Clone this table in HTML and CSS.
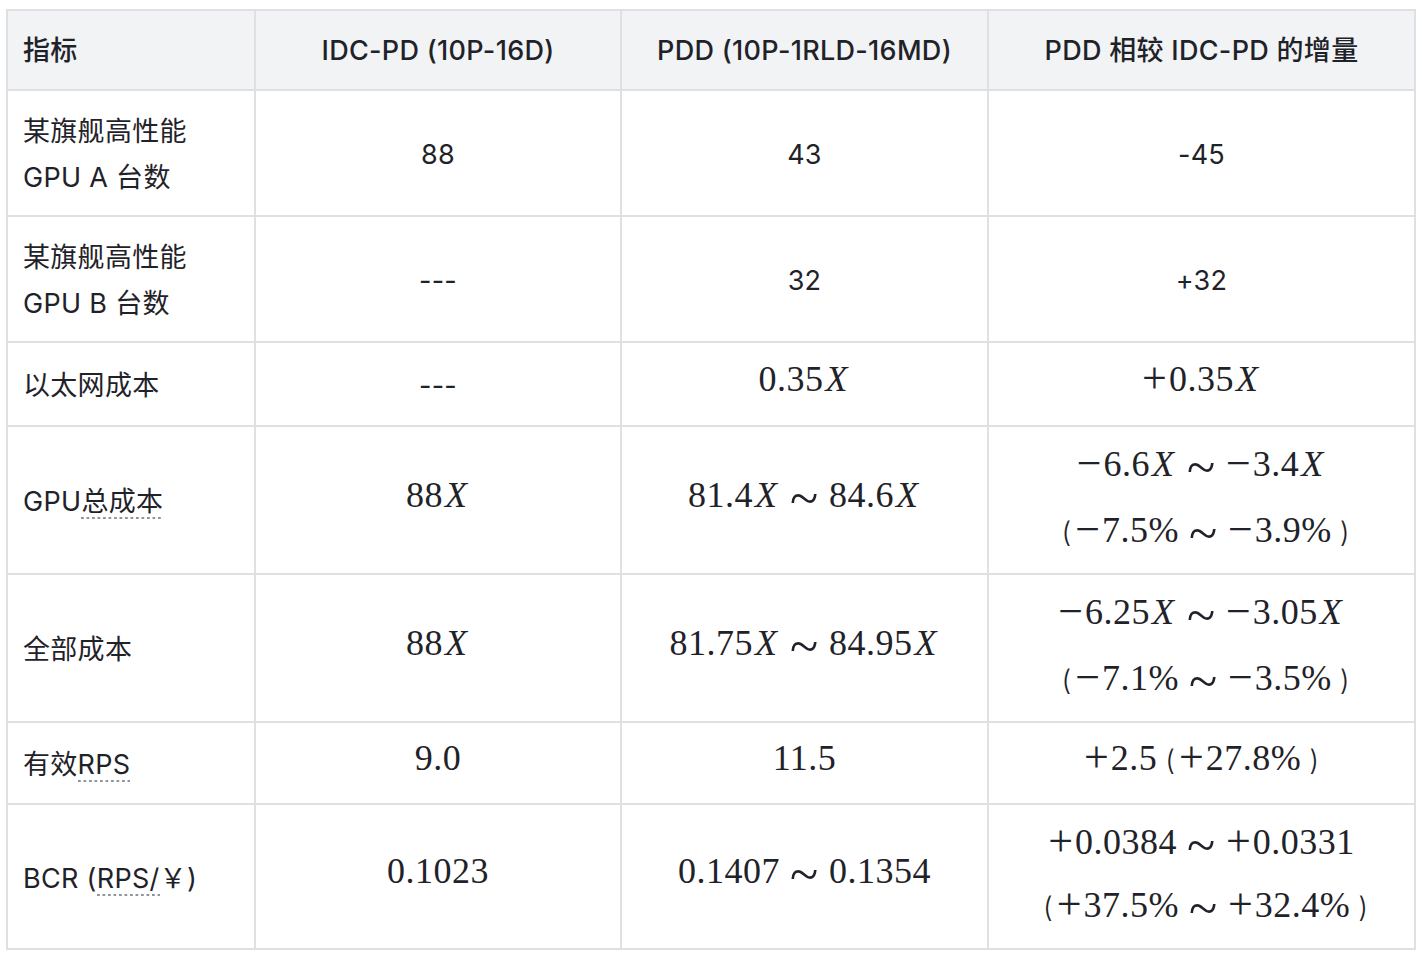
FILE: index.html
```html
<!DOCTYPE html>
<html lang="zh-CN">
<head>
<meta charset="utf-8">
<title>PDD vs IDC-PD</title>
<link rel="stylesheet" href="styles.css">
</head>
<body>
<div class="page">
  <table class="metrics">
    <colgroup>
      <col class="c1"><col class="c2"><col class="c3"><col class="c4">
    </colgroup>
    <thead>
      <tr class="h-head">
        <th class="label">指标</th>
        <th>IDC-PD (10P-16D)</th>
        <th>PDD (10P-1RLD-16MD)</th>
        <th>PDD 相较 IDC-PD 的增量</th>
      </tr>
    </thead>
    <tbody>
      <tr class="h-126">
        <td class="label">某旗舰高性能<br>GPU A 台数</td>
        <td>88</td>
        <td>43</td>
        <td>-45</td>
      </tr>
      <tr class="h-126">
        <td class="label">某旗舰高性能<br>GPU B 台数</td>
        <td>---</td>
        <td>32</td>
        <td>+32</td>
      </tr>
      <tr class="h-84">
        <td class="label">以太网成本</td>
        <td>---</td>
        <td class="m"><span class="math">0.35<i>X</i></span></td>
        <td class="m"><span class="math"><span class="op">+</span>0.35<i>X</i></span></td>
      </tr>
      <tr class="h-148">
        <td class="label">GPU<span class="mark">总成本</span></td>
        <td class="m"><span class="math">88<i>X</i></span></td>
        <td class="m"><span class="math">81.4<i>X</i><span class="rel">~</span>84.6<i>X</i></span></td>
        <td class="s">
          <div class="stack">
            <span class="math"><span class="op">−</span>6.6<i>X</i><span class="rel">~</span><span class="op">−</span>3.4<i>X</i></span>
            <span class="math"><span class="lp">(</span><span class="op">−</span>7.5%<span class="rel">~</span><span class="op">−</span>3.9%<span class="rp">)</span></span>
          </div>
        </td>
      </tr>
      <tr class="h-148">
        <td class="label">全部成本</td>
        <td class="m"><span class="math">88<i>X</i></span></td>
        <td class="m"><span class="math">81.75<i>X</i><span class="rel">~</span>84.95<i>X</i></span></td>
        <td class="s">
          <div class="stack">
            <span class="math"><span class="op">−</span>6.25<i>X</i><span class="rel">~</span><span class="op">−</span>3.05<i>X</i></span>
            <span class="math"><span class="lp">(</span><span class="op">−</span>7.1%<span class="rel">~</span><span class="op">−</span>3.5%<span class="rp">)</span></span>
          </div>
        </td>
      </tr>
      <tr class="h-82">
        <td class="label">有效<span class="mark">RPS</span></td>
        <td class="m"><span class="math">9.0</span></td>
        <td class="m"><span class="math">11.5</span></td>
        <td class="m"><span class="math"><span class="op">+</span>2.5<span class="lp">(</span><span class="op">+</span>27.8%<span class="rp">)</span></span></td>
      </tr>
      <tr class="h-145">
        <td class="label">BCR (<span class="mark">RPS/</span>￥)</td>
        <td class="m"><span class="math">0.1023</span></td>
        <td class="m"><span class="math">0.1407<span class="rel">~</span>0.1354</span></td>
        <td class="s">
          <div class="stack tight">
            <span class="math"><span class="op">+</span>0.0384<span class="rel">~</span><span class="op">+</span>0.0331</span>
            <span class="math"><span class="lp">(</span><span class="op">+</span>37.5%<span class="rel">~</span><span class="op">+</span>32.4%<span class="rp">)</span></span>
          </div>
        </td>
      </tr>
    </tbody>
  </table>
</div>
</body>
</html>
```
FILE: styles.css
```css
html, body {
  margin: 0;
  padding: 0;
  background: #ffffff;
}

.page {
  padding: 9px 6px;
}

.metrics {
  border-collapse: collapse;
  table-layout: fixed;
  width: 1410px;
  font-family: "Inter", "Noto Sans CJK SC", sans-serif;
  font-size: 27px;
  letter-spacing: 0.3px;
  color: #1f2329;
}

.c1 { width: 248px; }
.c2 { width: 366px; }
.c3 { width: 367px; }
.c4 { width: 427px; }

.metrics th,
.metrics td {
  border: 2px solid #dee0e3;
  text-align: center;
  vertical-align: middle;
  padding: 3px 15px 0;
  line-height: 46px;
}

.metrics th {
  background: #f2f3f5;
  font-weight: 500;
  padding-top: 2px;
}

.metrics .label {
  text-align: left;
}

.metrics td.label {
  padding-top: 4px;
}

.metrics td.m {
  padding: 0 15px 8px;
}

.metrics td.s {
  padding: 0 15px 5px;
}

.h-head { height: 80px; }
.h-126 { height: 126px; }
.h-84 { height: 84px; }
.h-148 { height: 148px; }
.h-82 { height: 82px; }
.h-145 { height: 145px; }

.mark {
  background-image: linear-gradient(to right, #8f959e 45%, transparent 45%);
  background-size: 5.5px 2px;
  background-repeat: repeat-x;
  background-position: left bottom;
  padding-bottom: 1px;
}

.math {
  font-family: "Liberation Serif", "DejaVu Serif", serif;
  font-size: 36px;
  letter-spacing: 0.5px;
  white-space: nowrap;
}

.math i {
  font-style: italic;
  letter-spacing: 0;
  margin: 0 3px 0 2px;
}

.op {
  font-family: "Liberation Serif", serif;
  font-size: 44px;
  line-height: 0;
  letter-spacing: 0;
  vertical-align: -2px;
  margin-right: 2px;
}

.rel {
  display: inline-block;
  width: 26px;
  margin: 0 13px 0 10px;
  text-align: center;
  font-family: "Liberation Serif", serif;
  font-size: 52px;
  line-height: 0;
  letter-spacing: 0;
  vertical-align: -9px;
}

.lp,
.rp {
  font-family: "Inter", sans-serif;
  font-weight: 300;
  font-size: 28px;
  letter-spacing: 0;
}

.lp {
  margin: 0 4px 0 8px;
}

.rp {
  margin-left: 8px;
}

.stack {
  display: flex;
  flex-direction: column;
  align-items: center;
  gap: 20px;
  line-height: 46px;
}

.stack.tight {
  gap: 17px;
}
```
